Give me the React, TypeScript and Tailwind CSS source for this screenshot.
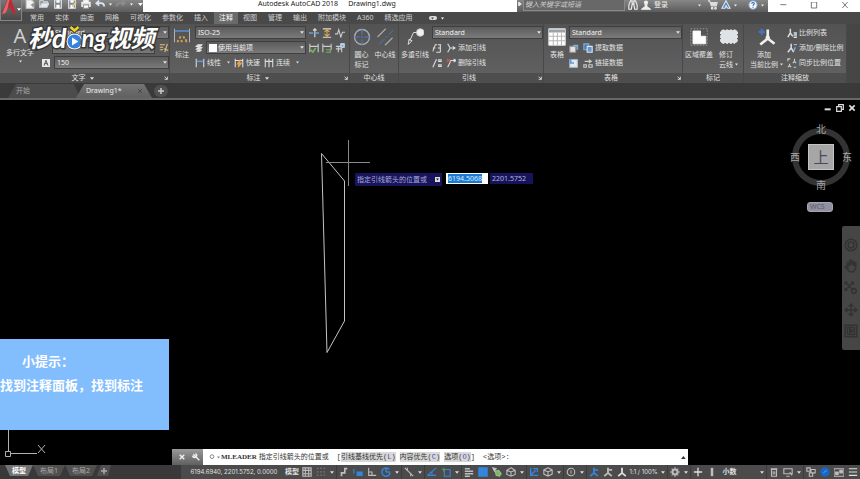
import type { ReactNode } from 'react'
import clsx from 'clsx'

interface IconProps {
  size?: string
  box?: string
  className?: string
  children: ReactNode
}

function Icon({ size = 'size-2.5', box = '0 0 12 12', className, children }: IconProps) {
  return (
    <svg
      viewBox={box}
      className={clsx('shrink-0', size, className)}
      fill="none"
      stroke="currentColor"
      strokeWidth="1.3"
      aria-hidden="true"
    >
      {children}
    </svg>
  )
}

function Caret({ className = 'w-1' }: { className?: string }) {
  return (
    <svg viewBox="0 0 8 5" className={clsx('h-[3px] shrink-0', className)} fill="currentColor" aria-hidden="true">
      <path d="M0 0h8L4 5z" />
    </svg>
  )
}

/* ---------- drawings ---------- */

const doc = (
  <>
    <path d="M1.500 1h6l3 3v7h-9z" fill="#f2f2f2" stroke="#ccc" />
    <path d="M7 7h5M9.500 5v5" stroke="#888" />
  </>
)
const folder = (
  <>
    <path d="M1 10V2h4l1 1.500h4V5" stroke="#ddd" />
    <path d="M1 10l2.500-5H12l-2.500 5z" fill="#e8e8e8" stroke="#c8d4e4" />
  </>
)
const disk = (
  <>
    <path d="M2 1h8v10H2z" fill="#7b8492" stroke="#e5e5e5" />
    <path d="M4 1.500h4v3H4zM4 7h4v4H4z" fill="#fff" stroke="none" />
  </>
)
const diskPen = (
  <>
    {disk}
    <path d="M6 9l5-5" stroke="#e8c680" strokeWidth="2" />
  </>
)
const printer = (
  <>
    <path d="M3 4V1h6v3" fill="#fff" stroke="#ddd" />
    <path d="M1 4h10v5H1z" fill="#d9e2ee" stroke="#eee" />
    <path d="M3 7h6v4H3z" fill="#fff" stroke="#999" />
  </>
)
const undo = <path d="M5 2L1.500 5 5 8M2 5h5c3 0 4 2 4 4" stroke="#dde6f2" strokeWidth="2" />
const redo = <path d="M7 2l3.500 3L7 8M10 5H5C2 5 1 7 1 9" stroke="#8c8c8c" strokeWidth="2" />

const dimension = (
  <>
    <path d="M2 1v18M22 1v18" stroke="#b8b8b8" />
    <path d="M2 4h20" stroke="#5c8fd0" strokeWidth="2" />
    <path d="M6 19l1-3M9 14l1-3M14 11l1 3M17 15l1 4M11 16l1 3" stroke="#d6a24c" strokeWidth="2.500" />
  </>
)
const linear = (
  <>
    <path d="M1.500 1v10M10.500 1v10" stroke="#ddd" />
    <path d="M2 4h8" stroke="#5f97d8" strokeWidth="2" />
  </>
)
const quick = (
  <>
    <path d="M1.500 1v10M10.500 1v10M2 3h8" stroke="#ddd" />
    <path d="M7 3L4 7h2l-1 4 4-5H7z" fill="#e8a24a" stroke="#e8a24a" />
  </>
)
const chain = <path d="M1.500 1v10M6 1v10M10.500 1v10M1 4h10" stroke="#ddd" />
const dimBreak = (
  <>
    <path d="M0 6h5M8 6h4" stroke="#67a0dc" strokeWidth="2" />
    <path d="M7 1v10M5 3l2-2 2 2" stroke="#ddd" />
  </>
)
const dimSpace = (
  <>
    <path d="M1 1h10M1 11h10" stroke="#ddd" />
    <path d="M6 2v8M3 5l3-3 3 3M3 7l3 3 3-3" stroke="#e2ad50" />
  </>
)
const jog = <path d="M0 7h3l1.500-5L7 11l2-6h3" stroke="#ccc" />
const inspect = (
  <>
    <path d="M1 1v10M11 1v10M1 4h10" stroke="#ccc" />
    <path d="M2 8l2.500 3L8 6" stroke="#71b75a" strokeWidth="2" />
  </>
)
const update = (
  <>
    <path d="M1 1v10M11 1v7M1 4h10" stroke="#ccc" />
    <path d="M5 8h5v3H5" stroke="#71b75a" />
  </>
)
const tolerance = (
  <>
    <path d="M1 4h6M4 4v7M8 6v5M1 7h7" stroke="#ccc" />
    <path d="M7 1h4v4H7z" fill="#6fa9e6" stroke="#dce9f8" />
  </>
)
const layers = <path d="M4 1h7L8 4H1zM4 5h7L8 8H1M4 9h6l-2 2H2" fill="#e4e4e4" stroke="#e4e4e4" />
const centerMark = (
  <>
    <circle cx="12" cy="12" r="10" stroke="#a9adb3" strokeWidth="1.800" />
    <path d="M12 1v8M12 11v2M12 15v8M1 12h8M11 12h2M15 12h8" stroke="#4d79c7" />
  </>
)
const centerLine = (
  <>
    <path d="M2 12L13 1M12 23l10-10" stroke="#aaa" strokeWidth="1.500" />
    <path d="M4 22l7-7M13 13l2-2M17 9l6-6" stroke="#4d79c7" />
  </>
)
const leader = (
  <>
    <path d="M3 22l1-7 4 2zM5 17L10 6h5" fill="none" stroke="#ddd" />
    <circle cx="19" cy="6" r="5" fill="#f1f1f4" stroke="#c5c5cc" />
  </>
)
const leaderAlign = <path d="M1 10l3-8h2M7 2h4M1 6h3M10 2v9M7 6h3M5 11h5" stroke="#ddd" />
const leaderAdd = <path d="M2 11l3-5L2 1M5 6h6M8 4l3 2-3 2" stroke="#ddd" />
const leaderCollect = <path d="M1 11l4-9h1M8 2h3v2H8zM8 8h3v2H8z" stroke="#ddd" />
const leaderRemove = (
  <>
    <path d="M2 11L6 3h5M9 1l3 2-3 2" stroke="#ddd" />
    <path d="M1 1l4 4M5 1L1 5" stroke="#cf5a4c" />
  </>
)
const table = (
  <>
    <path d="M1 1h22v22H1z" fill="#fff" stroke="#ddd" />
    <path d="M1 2h22v4H1z" fill="#9aa2ac" stroke="none" />
    <path d="M1 11h22M1 17h22M7 6v17M12.500 6v17M18 6v17" stroke="#b5b5b5" />
  </>
)
const sheetUp = (
  <>
    <path d="M1 4h7v7H1z" fill="#e5e5e5" stroke="#999" />
    <path d="M5 3h5v5" stroke="#7fb0de" strokeWidth="2" />
  </>
)
const extract = (
  <>
    <path d="M1 1h6v7H1z" fill="#4978b8" stroke="#84a9d8" />
    <path d="M5 4h6v7H5z" fill="#6c93c8" stroke="#dce6f4" />
  </>
)
const sheetDown = (
  <>
    <path d="M1 2h9v9H1z" fill="#e5e9ee" stroke="#b5c5d6" />
    <path d="M2 1v5h4" stroke="#5d98d8" strokeWidth="2" />
  </>
)
const link = <path d="M2 4h7M7 2l3 2-3 2M1 8h3v3H1zM7 8h4v3H7z" stroke="#ccc" />
const wipeout = (
  <>
    <path d="M1 1h22v22H1z" stroke="#999" strokeDasharray="2 2" />
    <path d="M4 4h10v7h7v10H4z" fill="#fff" stroke="#f5f5f5" />
  </>
)
const cloud = (
  <path
    d="M2 4c1-2 4-2 5 0 1-2 4-2 5 0 1-2 4-2 5 0 1-2 4-2 5 0 2 1 2 4 0 5 2 1 2 4 0 5 2 2 1 5-1 5-1 2-3 2-4 0-1 2-4 2-5 0-1 2-4 2-5 0-1 2-4 2-5 0-2-1-2-4 0-5-2-1-2-4 0-5-2-1-2-4 0-5z"
    fill="#dfe3e6"
    stroke="#eee"
  />
)
const scaleAdd = (
  <>
    <path d="M13 2v12L3 22M13 14l9 7" stroke="#f0f0f0" strokeWidth="3.500" />
    <circle cx="13" cy="13" r="3" fill="#f0f0f0" stroke="none" />
    <path d="M5 1v8M1 5h8" stroke="#4576b8" strokeWidth="3" />
  </>
)
const scaleList = <path d="M4 1v5L1 11M4 6l3 4M8 6h4M8 8.500h4M8 11h4" stroke="#ddd" strokeWidth="1.800" />
const scaleEdit = (
  <>
    <path d="M5 1v5L1 11M5 6l3 5" stroke="#ddd" strokeWidth="1.800" />
    <path d="M8 2h4M10 5l-2 5" stroke="#8fb4e4" strokeWidth="1.500" />
  </>
)
const scaleSync = <path d="M1 4V1h3M9 1v3l2 2M9 4L7 6M3 7v2l-2 2M3 9l2 2M8 11h3" stroke="#ccc" />
const person = (
  <>
    <circle cx="6" cy="3" r="2.500" fill="currentColor" stroke="none" />
    <path d="M5 5h2v3l4 3H1l4-3z" fill="currentColor" />
  </>
)
const tripod = <path d="M6 1v6L1.500 11M6 7l4.500 4" strokeWidth="2.200" />
const tripodDot = (
  <>
    {tripod}
    <path d="M7 3.500h4" strokeWidth="2" />
  </>
)

/* ---------- ribbon ---------- */

function Combo({ label, value, swatch }: { label: string; value: string; swatch?: boolean }) {
  return (
    <div className="flex h-[13px] min-w-0 flex-1 items-center border border-[#3f3f3f] bg-linear-to-b from-[#5c5c5c] to-[#7a7a7a] pr-px pl-0.5">
      {swatch && <span className="mr-px size-2 shrink-0 bg-white" />}
      <select aria-label={label} className="min-w-0 flex-1 appearance-none bg-transparent text-[#f0f0f0] outline-none">
        <option>{value}</option>
      </select>
      <Caret />
    </div>
  )
}

function BigButton({ icon, lines, caret }: { icon: ReactNode; lines: string[]; caret?: boolean }) {
  return (
    <button className="flex shrink-0 flex-col items-center gap-1 pt-0.5">
      <Icon size="size-[18px]" box="0 0 24 24">{icon}</Icon>
      <span className="flex items-end gap-0.5">
        <span className="leading-[10px] whitespace-nowrap">
          {lines.map((line) => (
            <span key={line} className="block">{line}</span>
          ))}
        </span>
        {caret && <Caret className="mb-1 w-[3px]" />}
      </span>
    </button>
  )
}

function Tool({ icon, label, caret }: { icon: ReactNode; label?: string; caret?: boolean }) {
  return (
    <button className="flex shrink-0 items-center gap-0.5 whitespace-nowrap" aria-label={label ?? '工具'}>
      <Icon>{icon}</Icon>
      {label}
      {caret && <Caret className="ml-1 w-[3px]" />}
    </button>
  )
}

function Row({ children, className = 'gap-1' }: { children: ReactNode; className?: string }) {
  return <div className={clsx('flex h-[13px] items-center', className)}>{children}</div>
}

interface PanelProps {
  title: string
  caret?: boolean
  launcher?: boolean
  className?: string
  children: ReactNode
}

function Panel({ title, caret, launcher, className, children }: PanelProps) {
  return (
    <section className="flex min-w-0 flex-col border-r border-[#484848] bg-linear-to-b from-[#535353] to-[#626262]">
      <div className={clsx('flex h-[49px] pt-0.5', className)}>{children}</div>
      <h2 className="flex h-2.5 items-center bg-[#4e4e4e] px-px">
        <span className="flex flex-1 items-center justify-center gap-1">
          {title}
          {caret && <Caret />}
        </span>
        {launcher && (
          <Icon size="size-1" box="0 0 6 6"><path d="M1 1l4 4M5 1v4H1" /></Icon>
        )}
      </h2>
    </section>
  )
}

function Ribbon() {
  return (
    <div className="grid grid-cols-[170fr_180fr_49fr_145fr_139fr_61fr_103fr_13fr] text-[#e2e2e2]">
      <Panel title="文字" caret launcher className="gap-1 pl-1.5">
        <button className="flex w-7 shrink-0 flex-col items-center gap-0.5">
          <span className="text-[20px] leading-[20px] text-[#d0d0d0]">A</span>
          <span className="whitespace-nowrap">多行文字</span>
          <Caret className="w-[3px]" />
        </button>
        <div className="flex min-w-0 flex-1 flex-col gap-0.5">
          <Row className="pl-3.5"><Combo label="文字样式" value="Standard" /></Row>
          <Row className="gap-1 pl-3.5">
            <Combo label="查找文字" value="" />
            <Tool icon={<path d="M1 2h6M1 5h4M1 8h4M10 1l-3 10M6 7l5 2" stroke="#e5c083" />} />
          </Row>
          <Row className="gap-1 pl-1">
            <Icon size="size-2"><path d="M0 0h12v12H0z" fill="#e8e8e8" stroke="none" /><path d="M3 10l3-8 3 8M4 7h4" stroke="#444" /></Icon>
            <Combo label="文字高度" value="150" />
          </Row>
        </div>
      </Panel>

      <Panel title="标注" caret launcher className="gap-1 pr-1 pl-[3px]">
        <BigButton icon={dimension} lines={['标注']} />
        <div className="flex min-w-0 flex-1 flex-col gap-0.5">
          <Row className="gap-[3px]">
            <Combo label="标注样式" value="ISO-25" />
            <Tool icon={dimBreak} /><Tool icon={dimSpace} /><Tool icon={jog} />
          </Row>
          <Row className="gap-[3px]">
            <Icon size="size-2">{layers}</Icon>
            <Combo label="标注图层" value="使用当前项" swatch />
            <Tool icon={inspect} /><Tool icon={update} /><Tool icon={tolerance} />
          </Row>
          <Row className="gap-1">
            <Tool icon={linear} label="线性" caret />
            <Tool icon={quick} label="快速" />
            <Tool icon={chain} label="连续" caret />
          </Row>
        </div>
      </Panel>

      <Panel title="中心线" className="justify-center gap-1">
        <BigButton icon={centerMark} lines={['圆心', '标记']} />
        <BigButton icon={centerLine} lines={['中心线']} />
      </Panel>

      <Panel title="引线" launcher className="gap-[3px] pl-0.5">
        <BigButton icon={leader} lines={['多重引线']} />
        <div className="flex min-w-0 flex-1 flex-col gap-0.5">
          <Row><Combo label="多重引线样式" value="Standard" /></Row>
          <Row><Tool icon={leaderAlign} /><Tool icon={leaderAdd} label="添加引线" /></Row>
          <Row><Tool icon={leaderCollect} /><Tool icon={leaderRemove} label="删除引线" /></Row>
        </div>
      </Panel>

      <Panel title="表格" launcher className="gap-[3px] pl-1">
        <BigButton icon={table} lines={['表格']} />
        <div className="flex min-w-0 flex-1 flex-col gap-0.5">
          <Row><Combo label="表格样式" value="Standard" /></Row>
          <Row><Tool icon={sheetUp} /><Tool icon={extract} label="提取数据" /></Row>
          <Row><Tool icon={sheetDown} /><Tool icon={link} label="链接数据" /></Row>
        </div>
      </Panel>

      <Panel title="标记" className="gap-1.5 pl-0.5">
        <BigButton icon={wipeout} lines={['区域覆盖']} />
        <BigButton icon={cloud} lines={['修订', '云线']} caret />
      </Panel>

      <Panel title="注释缩放" className="gap-1 pl-1.5">
        <BigButton icon={scaleAdd} lines={['添加', '当前比例']} caret />
        <div className="flex flex-col gap-0.5">
          <Row><Tool icon={scaleList} label="比例列表" /></Row>
          <Row><Tool icon={scaleEdit} label="添加/删除比例" /></Row>
          <Row><Tool icon={scaleSync} label="同步比例位置" /></Row>
        </div>
      </Panel>
      <div className="bg-[#464646]" />
    </div>
  )
}

/* ---------- title bar and tabs ---------- */

const TABS = ['常用', '实体', '曲面', '网格', '可视化', '参数化', '插入', '注释', '视图', '管理', '输出', '附加模块', 'A360', '精选应用']
const QUICK = [doc, folder, disk, diskPen, printer, undo]

function Header() {
  return (
    <header className="flex bg-[#494949]">
      <button aria-label="应用程序菜单" className="flex h-[21px] w-[22px] shrink-0 items-start border border-t-0 border-[#858585] bg-linear-to-b from-[#777] to-[#484848] text-white">
        <svg viewBox="0 0 32 32" className="size-4 shrink-0" aria-hidden="true">
          <path d="M12 0h9l9 29-8-4-3-8h-7l-3 8-8 4z" fill="#c22630" />
          <path d="M13 0h4l-4 17-3 8-8 4z" fill="#e8646a" />
          <path d="M16 5l3 9h-5z" fill="#6b5252" />
        </svg>
        <Caret className="mt-2 w-1" />
      </button>
      <div className="min-w-0 flex-1">
        <div className="grid h-3 grid-cols-[121fr_374fr_251fr_92fr]">
          <div className="flex items-center gap-1 overflow-hidden bg-linear-to-b from-[#878787] to-[#5c5c5c] pl-[3px] text-white">
            {QUICK.map((icon, i) => (
              <button key={i} aria-label="快速访问" className="mb-1">
                <Icon>{icon}</Icon>
              </button>
            ))}
            <Caret className="mb-1 w-[3px]" />
            <button aria-label="重做" className="mb-1"><Icon>{redo}</Icon></button>
            <Caret className="mb-1 w-[3px]" />
            <Caret className="mb-1 ml-px" />
          </div>
          <h1 className="flex gap-2.5 bg-white pl-[115px] leading-[8px] whitespace-nowrap text-[#222]">
            <span>Autodesk AutoCAD 2018</span>
            <span>Drawing1.dwg</span>
          </h1>
          <div className="flex items-center bg-linear-to-b from-[#878787] to-[#5c5c5c] pr-1 text-[#eee]">
            <Icon size="size-1" box="0 0 6 6" className="mx-px mb-1"><path d="M1 0l4 3-4 3z" fill="currentColor" /></Icon>
            <input
              aria-label="搜索"
              placeholder="键入关键字或短语"
              className="mb-px h-[11px] w-[102px] border border-t-0 border-[#8a8a8a] bg-[#686868] pb-0.5 pl-px italic outline-none placeholder:text-[#ccc]"
            />
            <div className="mb-0.5 flex flex-1 items-center gap-[3px] pl-[3px]">
              <Icon><path d="M3 1h2v4L4 11H1V6zM9 1H7v4l1 6h3V6zM5 5h2" stroke="#f0f0f0" /></Icon>
              <Icon className="text-[#f0f0f0]">{person}</Icon>
              <span>登录</span>
              <span className="flex-1" />
              <Caret className="mr-1 w-[3px]" />
              <Icon><path d="M0 1h2l2 6h6l1-4H3" fill="#ddd" stroke="#ddd" /><circle cx="5" cy="10" r="1" /><circle cx="9" cy="10" r="1" /></Icon>
              <Icon><path d="M6 1L1 10h4L6 7l2 3h3z" fill="#5d88ba" stroke="#dce8f6" /></Icon>
              <Caret className="mr-2 w-[3px]" />
              <Icon><circle cx="6" cy="6" r="5" fill="#f2f6fb" stroke="#7fa0cc" /><path d="M4.500 4.500c0-2 3-2 3 0 0 1-1.500 1-1.500 2.500M6 8v1.200" stroke="#2c5b9c" /></Icon>
              <Caret className="w-[3px]" />
            </div>
          </div>
          <div className="flex justify-around bg-white text-[#666]">
            <button aria-label="最小化"><Icon size="size-2"><path d="M2 4h9" /></Icon></button>
            <button aria-label="最大化"><Icon size="size-2"><path d="M2 0h8v9H2z" /></Icon></button>
            <button aria-label="关闭"><Icon size="size-2"><path d="M2 0l8 9M10 0L2 9" /></Icon></button>
          </div>
        </div>
        <nav className="flex h-3 items-center pl-[3px] text-[#d0d0d0]">
          {TABS.map((tab) => (
            <button
              key={tab}
              className={clsx('h-full shrink-0 px-[5px]', tab === '注释' ? 'bg-[#6a6a6a] text-white' : 'border-r border-transparent')}
            >
              {tab}
            </button>
          ))}
          <button aria-label="显示选项" className="ml-2.5 flex items-center gap-1 text-white">
            <span className="flex h-1 w-2 items-center justify-center rounded-xs bg-[#ddd] text-[#444]"><Caret className="w-[3px]" /></span>
            <Caret className="w-[3px]" />
          </button>
        </nav>
      </div>
    </header>
  )
}

function DocTabs() {
  return (
    <nav className="flex h-[17px] items-end border-b-2 border-[#686868] bg-[#3a3a3a] pl-2">
      <button className="h-3.5 w-[72px] bg-[#4c4c4c] pl-2 text-left text-[#a8a8a8] [clip-path:polygon(8px_0,66px_0,100%_100%,0_100%)]">开始</button>
      <button className="-ml-1 flex h-3.5 w-[76px] items-center justify-between bg-linear-to-b from-[#747474] to-[#606060] pr-2.5 pl-2.5 text-[#eee] [clip-path:polygon(8px_0,68px_0,100%_100%,0_100%)]">
        Drawing1*
        <Icon size="size-1" box="0 0 6 6" className="text-[#444]"><path d="M0 0l6 6M6 0L0 6" /></Icon>
      </button>
      <button aria-label="新图形" className="mb-px ml-0.5 flex h-3 w-3.5 items-center justify-center rounded-md bg-[#505050] text-[#ccc]">
        <Icon size="size-1.5" box="0 0 8 8"><path d="M4 0v8M0 4h8" strokeWidth="2" /></Icon>
      </button>
    </nav>
  )
}

/* Channel mark that sits over the text panel */
function Watermark() {
  return (
    <div className="absolute top-[22px] left-[28px] flex items-center text-[24px] leading-[32px] font-bold text-white italic [-webkit-text-stroke:3px_#383838] [paint-order:stroke_fill]">
      <span>秒</span>
      <span className="text-[27px] [font-family:Lato,sans-serif]">d</span>
      <svg viewBox="0 0 30 54" className="h-[27px] w-[15px] overflow-visible" aria-hidden="true">
        <path d="M7 4l8 7 8-7" fill="none" stroke="#383838" strokeWidth="9" />
        <circle cx="15" cy="33" r="16" fill="#fff" stroke="#383838" strokeWidth="2" />
        <path d="M7 4l8 7 8-7" fill="none" stroke="#f3d321" strokeWidth="5" />
        <circle cx="15" cy="33" r="14" fill="#3583df" />
        <path d="M10 25l13 8-13 8z" fill="#fff" />
      </svg>
      <span className="[font-family:Lato,sans-serif]">ng</span>
      <span>视频</span>
    </div>
  )
}

/* ---------- drawing area ---------- */

function ViewCube() {
  return (
    <div className="absolute top-[22px] right-1.5 grid grid-cols-[14px_38px_14px] grid-rows-[14px_42px_14px] place-items-center text-[10px] leading-[10px] text-[#a8a8a8]">
      <div className="absolute top-[6px] left-[4px] size-[58px] rounded-full border-6 border-[#333]" />
      <span className="relative col-start-2">北</span>
      <span className="relative col-start-1 row-start-2">西</span>
      <button className="relative row-start-2 size-[26px] border border-[#c4c4c4] bg-[#a6a6a6] text-[15px] leading-[22px] text-[#454b58]">上</button>
      <span className="relative row-start-2">东</span>
      <span className="relative col-start-2 row-start-3">南</span>
    </div>
  )
}

function NavBar() {
  return (
    <aside className="absolute top-[126px] right-0 flex h-[124px] w-[18px] flex-col items-center justify-around rounded-l-xs bg-[#464646] py-2 text-[#333]">
      <Icon size="size-3.5"><circle cx="6" cy="6" r="5" /><circle cx="6" cy="6" r="2.500" /></Icon>
      <Icon size="size-3.5"><path d="M3 6V3h1v3M5 6V1h1v4M7 5V2h1v4M9 6V3h1v5L8 11H5L1 7l1-1 2 2" /></Icon>
      <Icon size="size-3.5"><path d="M1 1l7 7M8 1L1 8M1 3V1h2M6 1h2v2M1 6v2h2" /><circle cx="8.500" cy="8.500" r="2" /></Icon>
      <Icon size="size-3.5"><path d="M6 1v10M1 6h10M4 3l2-2 2 2M4 9l2 2 2-2M3 4L1 6l2 2M9 4l2 2-2 2" /></Icon>
      <Icon size="size-3.5"><path d="M1 1h10v10H1zM3 3h6v6H3zM5 4.500L8 6 5 7.500z" /></Icon>
    </aside>
  )
}

function CommandLine() {
  return (
    <div className="absolute bottom-0 left-[20%] flex h-4 w-[60%] items-center bg-white text-[#333]">
      <div className="flex h-full w-[31px] shrink-0 items-center justify-around bg-linear-to-b from-[#9a9a9a] to-[#606060] pl-1 text-[#eee]">
        <button aria-label="关闭"><Icon size="size-1.5" box="0 0 8 8"><path d="M1 1l6 6M7 1L1 7" strokeWidth="2" /></Icon></button>
        <button aria-label="自定义"><Icon size="size-2"><path d="M2 2l9 9M1 4a3 3 0 104-3" strokeWidth="2.200" /></Icon></button>
      </div>
      <span className="ml-1.5 flex w-3 shrink-0 items-center gap-0.5 text-[#888]">
        <Icon size="size-1.5" box="0 0 8 8"><circle cx="4" cy="3.500" r="2.500" /></Icon>
        <Caret className="w-[3px]" />
      </span>
      <p className="flex flex-1 items-center whitespace-nowrap [font-family:'Liberation_Mono','Noto_Sans_CJK_SC',monospace]">
        <b className="mr-0.5 [font-family:'Liberation_Serif',serif]">MLEADER</b>
        <span>指定引线箭头的位置或</span>
        <span className="ml-2">[</span>
        <span className="bg-[#d8d8d8]">引线基线优先(<span className="text-[#4b43c9]">L</span>)</span>
        <span className="ml-1 bg-[#d8d8d8]">内容优先(<span className="text-[#4b43c9]">C</span>)</span>
        <span className="ml-1 bg-[#d8d8d8]">选项(<span className="text-[#4b43c9]">O</span>)</span>
        <span>]</span>
        <span className="ml-2">&lt;选项&gt;:</span>
      </p>
      <Caret className="mr-0.5 rotate-180" />
    </div>
  )
}

function Canvas() {
  return (
    <main className="relative min-h-[340px] flex-1 overflow-hidden bg-black">
      <svg className="absolute inset-0 size-full" fill="none" stroke="#a8a8a8" aria-hidden="true">
        <path d="M321.500 53.500L344.500 81V221L327 252.500z" stroke="#c4c4c4" />
        <path d="M326 62.500h44M348.500 40v46" stroke="#8a8a8a" />
      </svg>
      <svg viewBox="0 0 46 40" className="absolute bottom-0.5 left-1 h-10 w-[46px]" fill="none" stroke="#b0b0b0" aria-hidden="true">
        <path d="M4.500 0v28M7 30.500h26M1.500 28.500h5v5h-5zM34 22l7 8M41 22l-7 8" />
      </svg>

      <div className="absolute top-[73px] left-[355px] flex items-start gap-1">
        <label htmlFor="coord-x" className="flex h-[13px] w-[87px] items-center justify-between bg-[#17145c] px-0.5 whitespace-nowrap text-[#a9a8d8]">
          指定引线箭头的位置或
          <span className="flex size-[5px] items-center justify-center bg-[#ddd] text-[#222]"><Caret className="w-[3px]" /></span>
        </label>
        <div className="flex gap-0.5">
          <input
            id="coord-x"
            autoFocus
            defaultValue="6194.5068"
            onFocus={(e) => e.target.select()}
            className="h-[11px] w-[42px] bg-white px-0.5 text-[#333] outline-none selection:bg-[#1c7bd0] selection:text-[#d8ebff]"
          />
          <input
            aria-label="Y"
            defaultValue="2201.5752"
            className="h-[11px] w-[43px] bg-[#17145c] px-0.5 text-[#b5b4dd] outline-none"
          />
        </div>
      </div>

      <div className="absolute top-1 right-1 flex gap-1 text-[#ddd]">
        <button aria-label="最小化"><Icon size="size-2"><path d="M1 8h9" strokeWidth="3" /></Icon></button>
        <button aria-label="还原"><Icon size="size-2"><path d="M4 3V1h7v7H9M1 4h7v7H1z" strokeWidth="1.800" /></Icon></button>
        <button aria-label="关闭"><Icon size="size-2"><path d="M2 2l8 8M10 2l-8 8" strokeWidth="2.500" /></Icon></button>
      </div>
      <ViewCube />
      <button className="absolute top-[102px] right-[27px] h-2.5 w-[26px] rounded-[3px] border border-[#a5a5b2] bg-[#9090a0] pl-0.5 text-left leading-[8px] text-[#5c5c6c]">WCS</button>
      <NavBar />

      <div className="absolute bottom-[35px] left-0 h-[91px] w-[169px] bg-[#82bdfd] pt-2.5 text-[13px] leading-[24px] font-bold whitespace-nowrap text-white">
        <p className="pl-[22px]">小提示：</p>
        <p>找到注释面板，找到标注</p>
      </div>
      <CommandLine />
    </main>
  )
}

/* ---------- status bar ---------- */

function Cell({ children, tone = 'text-[#bdbdbd]', label = '状态' }: { children: ReactNode; tone?: string; label?: string }) {
  return (
    <button aria-label={label} className={clsx('flex w-3.5 shrink-0 items-center justify-center', tone)}>
      <Icon>{children}</Icon>
    </button>
  )
}

function Drop() {
  return (
    <button aria-label="更多" className="flex h-full w-[9px] shrink-0 items-center justify-center border-r border-[#3c3c3c] text-[#ddd]">
      <Caret />
    </button>
  )
}

const BLUE = 'text-[#3585dc]'

function StatusBar() {
  return (
    <footer className="flex h-3.5 bg-[#4b4b4b] text-[#e0e0e0]">
      <nav className="flex w-[21%] shrink-0 items-start bg-[#393939] pl-[5px] text-[#aaa]">
        <button className="h-[11px] w-7 bg-[#737373] font-bold text-white [clip-path:polygon(0_0,100%_0,23px_100%,5px_100%)]">模型</button>
        <button className="h-[11px] w-8 bg-[#505050] [clip-path:polygon(0_0,100%_0,27px_100%,5px_100%)]">布局1</button>
        <button className="h-[11px] w-8 bg-[#505050] [clip-path:polygon(0_0,100%_0,27px_100%,5px_100%)]">布局2</button>
        <button aria-label="新布局" className="flex h-[11px] w-3.5 items-center justify-center bg-[#505050] [clip-path:polygon(4px_0,100%_0,11px_100%,0_100%)]">
          <Icon size="size-1.5" box="0 0 8 8"><path d="M4 0v8M0 4h8" strokeWidth="2" /></Icon>
        </button>
      </nav>
      <div className="flex min-w-0 flex-1 items-center pl-2.5">
        <span className="w-[94px] shrink-0 text-[6px] whitespace-nowrap [font-family:Inter,sans-serif]">6194.6940, 2201.5752, 0.0000</span>
        <button className="w-[15px] shrink-0 font-bold whitespace-nowrap">模型</button>
        <Cell><path d="M1 1h10v10H1zM4 1v10M8 1v10M1 4h10M1 8h10" /></Cell>
        <Cell tone="text-[#777]"><path d="M2 1v10M6 1v10M10 1v10" strokeDasharray="1.500 2.500" strokeWidth="2" /></Cell>
        <Drop />
        <Cell><path d="M3 11V7h4V2h3" strokeWidth="2" /></Cell>
        <Cell tone={BLUE}><path d="M1 2v6M5 6h6v4H5z" fill="currentColor" /></Cell>
        <Cell><path d="M2 1v9h9M2 6h4v4" /></Cell>
        <Cell tone={BLUE}><path d="M10 3A5 5 0 1011 7M6 6V1M6 6h5" strokeWidth="1.800" /></Cell>
        <Drop />
        <Cell><path d="M1 1l10 10M4 1v4M8 7v4" /></Cell>
        <Drop />
        <Cell tone={BLUE}><path d="M11 1L1 10h10M6 6v4" /></Cell>
        <Cell tone={BLUE}><path d="M4 3h7v8H4z" /><path d="M1 3h5M3.500 1v5" stroke="#3fa35b" /></Cell>
        <Drop />
        <Cell><path d="M1 2h6M1 5h10M1 8h10M1 11h6" strokeWidth="1.800" /></Cell>
        <Cell tone={BLUE}><path d="M1 1h10v10H1z" fill="currentColor" /></Cell>
        <Cell><path d="M1 1l4 1-2 3z" fill="#ddd" /><path d="M4 5l4-1 3 4-2 3-4-1z" fill="#82b36d" stroke="#9bc487" /></Cell>
        <Cell><path d="M6 1l5 3v5l-5 2-5-2V4zM1 4l5 2 5-2M6 6v5" /></Cell>
        <Drop />
        <Cell tone={BLUE}><path d="M2 1v9h9M2 10l6-6M5 2h5v4" strokeWidth="1.600" /></Cell>
        <Cell><path d="M6 1l5 2.500v5L6 11 1 8.500v-5zM1 3.500L6 6l5-2.500M6 6v5" /></Cell>
        <Drop />
        <Cell><circle cx="6" cy="6" r="4.500" /><path d="M6 4v4" stroke="#d7a17c" /></Cell>
        <Drop />
        <Cell tone={BLUE}>{tripodDot}</Cell>
        <Cell>{tripodDot}</Cell>
        <Cell tone="text-[#ddd]">{tripod}</Cell>
        <button className="w-[30px] shrink-0 text-[6px] whitespace-nowrap [font-family:Inter,sans-serif]">1:1 / 100%</button>
        <Drop />
        <Cell><circle cx="6" cy="6" r="3" strokeWidth="2.500" /><path d="M6 0v12M0 6h12M2 2l8 8M10 2l-8 8" strokeDasharray="2 8" /></Cell>
        <Drop />
        <Cell tone="text-[#ddd]"><path d="M6 1v10M1 6h10" strokeWidth="1.600" /></Cell>
        <Cell><path d="M6 1v10" strokeWidth="3" /></Cell>
        <button className="flex-1 pl-1 text-left font-bold">小数</button>
        <Drop />
        <Cell><path d="M3 3h6v8H3zM2 2h8M5 5v4M7 5v4" /></Cell>
        <Cell><path d="M1 2h10v6H1zM4 11h4M8 6l3 4" /></Cell>
        <Drop />
        <Cell><path d="M1 1h4v4H1zM6 3h5v4H6zM4 7h4v4H4z" /></Cell>
        <Cell tone="text-[#1768c4]"><circle cx="6" cy="6" r="5" fill="currentColor" /><path d="M4 7l4-3" stroke="#4b9df0" /></Cell>
        <Cell><path d="M0 2h12v9H0z" /><path d="M2 6h3v3H2zM7 4h3v3H7z" fill="currentColor" /></Cell>
        <Cell tone="text-[#ddd]"><path d="M1 2h10M1 6h10M1 10h10" /></Cell>
      </div>
    </footer>
  )
}

export default function App() {
  return (
    <div className="relative flex h-screen flex-col overflow-hidden bg-black text-[7px] leading-[10px] [font-family:'Noto_Sans','Noto_Sans_CJK_SC',sans-serif]">
      <Header />
      <Ribbon />
      <DocTabs />
      <Canvas />
      <StatusBar />
      <Watermark />
    </div>
  )
}
